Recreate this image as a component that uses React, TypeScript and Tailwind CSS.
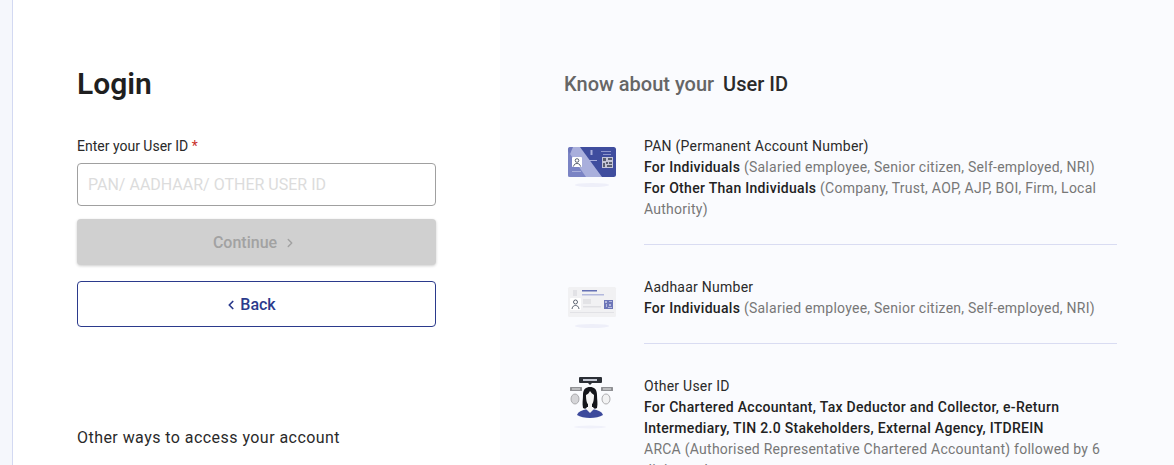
import { ChevronLeft, ChevronRight } from 'lucide-react';

function PanIcon() {
  return (
    <svg width="56" height="56" viewBox="0 0 56 56" fill="none">
      <ellipse cx="28" cy="48" rx="17" ry="2" fill="#eeeff9" />
      <rect x="4" y="10" width="48" height="30" rx="2.500" fill="#3f4d9e" />
      <path d="M6.500 10H16L38 40H6.500A2.500 2.500 0 0 1 4 37.500V12.500A2.500 2.500 0 0 1 6.500 10Z" fill="#a9afdc" />
      <path d="M6.500 10H9L4 22V12.500A2.500 2.500 0 0 1 6.500 10Z" fill="#6d76bb" />
      <path d="M4 14L22 40H6.500A2.500 2.500 0 0 1 4 37.500Z" fill="#7a83c4" />
      <rect x="8" y="20" width="10" height="10" rx="1" fill="#ffffff" />
      <circle cx="13" cy="23.500" r="1.800" stroke="#374151" strokeWidth="0.800" />
      <path d="M9.500 29.500c.5-2.500 2-3 3.500-3s3 .5 3.500 3" stroke="#374151" strokeWidth="0.800" />
      <path d="M26.500 13h2v5h-2z" fill="#a9afdc" />
      <rect x="23" y="23" width="10" height="1" fill="#a9afdc" />
      <rect x="37" y="14" width="10" height="1" fill="#8d95cc" />
      <rect x="39" y="17" width="8" height="1" fill="#8d95cc" />
      <rect x="38" y="20" width="11" height="11" fill="#c4c6d8" />
      <path d="M39 21h3v3h-3zM44 21h4v2h-4zM39 26h2v4h-2zM42 25h2v2h-2zM45 25h3v2h-3zM43 28h5v2h-5z" fill="#5a5f70" />
      <rect x="8" y="34" width="9" height="1" fill="#a9afdc" />
    </svg>
  );
}

function AadhaarIcon() {
  return (
    <svg width="56" height="56" viewBox="0 0 56 56" fill="none">
      <ellipse cx="28" cy="49" rx="17" ry="2" fill="#eeeff9" />
      <rect x="4" y="10" width="48" height="30" rx="1.500" fill="#f1f1f3" />
      <rect x="9" y="13" width="4" height="6" fill="#e2e2e6" />
      <rect x="18" y="13" width="15" height="1.500" fill="#6470b4" />
      <rect x="18" y="17" width="22" height="1.500" fill="#b4b9dd" />
      <rect x="6" y="21" width="11" height="12" rx="1" fill="#ffffff" />
      <circle cx="11.500" cy="25" r="2" stroke="#374151" strokeWidth="0.800" />
      <path d="M8 32c.5-3 2-3.500 3.500-3.500s3 .5 3.500 3.500" stroke="#374151" strokeWidth="0.800" />
      <rect x="19" y="22" width="8" height="5" fill="#e3e3e6" />
      <rect x="19" y="29" width="18" height="1.500" fill="#dedee2" />
      <rect x="40" y="23" width="9" height="9" fill="#6d76b8" />
      <path d="M41 24h2v2h-2zM45 24h3v1h-3zM42 27h1v3h-1zM45 27h2v2h-2zM44 30h4v1h-4z" fill="#b4b9dd" />
      <rect x="6" y="35" width="44" height="1" fill="#e2e2e6" />
    </svg>
  );
}

function OtherIcon() {
  return (
    <svg width="56" height="56" viewBox="0 0 56 56" fill="none">
      <ellipse cx="26" cy="53" rx="16" ry="1.500" fill="#f0f1fa" />
      <rect x="15" y="3" width="23" height="6" rx="1" fill="#2b2f36" />
      <path d="M24 9h4l-2 2z" fill="#2b2f36" />
      <rect x="19" y="5" width="14" height="2" fill="#c7cbd6" />
      <rect x="6" y="13" width="12" height="4" rx="0.500" fill="#8f9094" />
      <rect x="8" y="14.500" width="8" height="1" fill="#e5e5e5" />
      <rect x="37" y="13" width="12" height="4" rx="0.500" fill="#8f9094" />
      <rect x="39" y="14.500" width="8" height="1" fill="#e5e5e5" />
      <ellipse cx="11" cy="25" rx="4" ry="5" fill="#d5d5d8" stroke="#9a9a9e" strokeWidth="0.800" />
      <ellipse cx="42" cy="25" rx="4" ry="5" fill="#f2f2f3" stroke="#9a9a9e" strokeWidth="0.800" />
      <path d="M13 41c1-3.500 7-6 13-6s12 2.500 13 6c-3 2-8 3-13 3s-10-1-13-3Z" fill="#3d4a9c" />
      <path d="M26 39l-4-4h8z" fill="#f5f5f5" />
      <path d="M19 21c0-6 3-8 7-8s7 2 7 8c0 5 1 8 0 13-2 1-3 1-4-1h-6c-1 2-2 2-4 1-1-5 0-8 0-13Z" fill="#14161b" />
      <path d="M22 21c2-1 3-2 4-4 1 2 3 3 4 4 0 6-1 10-4 10s-4-4-4-10Z" fill="#f5f5f5" />
      <path d="M24 29h4v6l-2 3-2-3z" fill="#f5f5f5" />
    </svg>
  );
}

const rows = [
  {
    icon: <PanIcon />,
    offset: 'mt-[1px]',
    body: (
      <>
        <p className="text-[#2a2a2a]">PAN (Permanent Account Number)</p>
        <p><b className="font-medium tracking-[0.3px] text-[#222222]">For Individuals</b> (Salaried employee, Senior citizen, Self-employed, NRI)</p>
        <p><b className="font-medium tracking-[0.3px] text-[#222222]">For Other Than Individuals</b> (Company, Trust, AOP, AJP, BOI, Firm, Local Authority)</p>
      </>
    ),
  },
  {
    icon: <AadhaarIcon />,
    offset: 'mt-0',
    body: (
      <>
        <p className="text-[#2a2a2a]">Aadhaar Number</p>
        <p><b className="font-medium tracking-[0.3px] text-[#222222]">For Individuals</b> (Salaried employee, Senior citizen, Self-employed, NRI)</p>
      </>
    ),
  },
  {
    icon: <OtherIcon />,
    offset: '-mt-[2px]',
    body: (
      <>
        <p className="text-[#2a2a2a]">Other User ID</p>
        <p className="font-medium tracking-[0.3px] text-[#222222]">For Chartered Accountant, Tax Deductor and Collector, e-Return Intermediary, TIN 2.0 Stakeholders, External Agency, ITDREIN</p>
        <p>ARCA (Authorised Representative Chartered Accountant) followed by 6 digit number</p>
      </>
    ),
  },
];

export default function App() {
  return (
    <div className="flex h-[465px] overflow-hidden bg-[#fafbfe] font-['Roboto',sans-serif]">
      {/* Left gutter */}
      <div className="w-[12px] shrink-0 bg-[#f5f7fc]" />

      {/* Login card */}
      <div className="-mt-2 h-[600px] w-[488px] shrink-0 rounded-lg border-l border-[#d3d9f2] bg-white pt-[74px] pl-[64px]">
        <h1 className="text-[30px] leading-[36px] font-semibold text-[#1f1f1f]">Login</h1>
        <label className="mt-[34px] block text-sm leading-[20px] text-[#2a2a2a]">
          Enter your User ID <span className="text-[#c9302c]">*</span>
        </label>
        <input
          placeholder="PAN/ AADHAAR/ OTHER USER ID"
          className="mt-[7px] block h-[43px] w-[359px] rounded border border-[#a0a0a0] px-[10px] text-base outline-none placeholder:text-[#dcdcdc]"
        />
        <button className="mt-[13px] flex h-[46px] w-[359px] items-center justify-center gap-[6px] rounded bg-[#d0d0d0] pt-[2px] pr-[3px] text-base font-medium text-[#a2a2a2] shadow-[0_1px_3px_rgba(0,0,0,0.2)]">
          Continue <ChevronRight size={14} strokeWidth={2.5} />
        </button>
        <button className="mt-[16px] flex h-[46px] w-[359px] items-center justify-center gap-[2px] rounded border border-[#2b3a8c] bg-white pt-[2px] pr-[13px] text-base font-medium text-[#2b3a8c]">
          <ChevronLeft size={14} strokeWidth={3} /> Back
        </button>
        <p className="mt-[101px] text-base leading-[20px] tracking-[0.45px] text-[#2a2a2a]">Other ways to access your account</p>
      </div>

      {/* Info column */}
      <div className="min-w-0 flex-1 pt-[72px] pr-[57px] pl-[64px]">
        <h2 className="text-xl leading-[24px] font-medium text-[#666666]">
          Know about your <span className="ml-[4px] text-[#2a2a2a]">User ID</span>
        </h2>
        <div className="mt-[40px] flex flex-col">
          {rows.map((row, i) => (
            <div key={i} className="flex">
              <div className={`${row.offset} w-[56px] shrink-0`}>{row.icon}</div>
              <div className="ml-[24px] flex-1">
                <div className="text-sm leading-[21px] tracking-[0.25px] text-[#777777]">{row.body}</div>
                {i < rows.length - 1 && <div className="mt-[24px] mb-[32px] h-px bg-[#d9dcf2]" />}
              </div>
            </div>
          ))}
        </div>
      </div>
    </div>
  );
}
